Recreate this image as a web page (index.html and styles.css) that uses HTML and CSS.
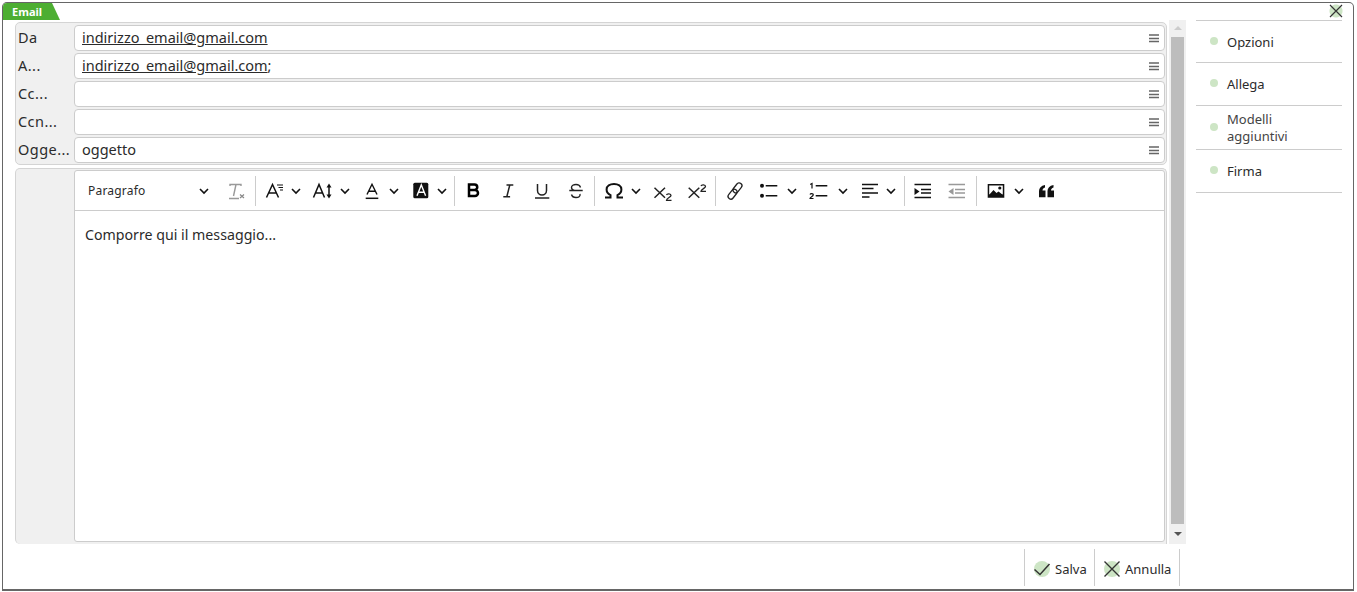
FILE: index.html
```html
<!DOCTYPE html>
<html lang="it">
<head>
<meta charset="utf-8">
<title>Email</title>
<link rel="stylesheet" href="styles.css">
</head>
<body>
<svg class="defs" width="0" height="0" aria-hidden="true">
  <defs>
    <symbol id="chev" viewBox="0 0 10 10"><path d="M1 3l4 4 4-4" fill="none" stroke="#111" stroke-width="1.6"/></symbol>
    <symbol id="menu" viewBox="0 0 10 10"><path d="M0 2h10M0 5.500h10M0 8.500h10" stroke="#666" stroke-width="1.500"/></symbol>
  </defs>
</svg>
<div class="window">
  <div class="topbar">
    <div class="tab">Email</div>
    <button class="close" aria-label="Chiudi"><svg width="14" height="14" viewBox="0 0 14 14"><path d="M1 1l12 12M13 1L1 13" stroke="#333" stroke-width="1.2"/></svg></button>
  </div>
  <div class="content">
    <div class="left">
      <div class="panel fields">
        <div class="row"><span class="label">Da</span><div class="input"><span class="val link">indirizzo_email@gmail.com</span><svg class="menu"><use href="#menu"/></svg></div></div>
        <div class="row"><span class="label">A...</span><div class="input"><span class="val"><span class="link">indirizzo_email@gmail.com</span>;</span><svg class="menu"><use href="#menu"/></svg></div></div>
        <div class="row"><span class="label">Cc...</span><div class="input"><span class="val"></span><svg class="menu"><use href="#menu"/></svg></div></div>
        <div class="row"><span class="label">Ccn...</span><div class="input"><span class="val"></span><svg class="menu"><use href="#menu"/></svg></div></div>
        <div class="row"><span class="label">Ogge...</span><div class="input"><span class="val">oggetto</span><svg class="menu"><use href="#menu"/></svg></div></div>
      </div>
      <div class="panel editor-panel">
        <div class="editor">
          <div class="toolbar">
            <div class="format">Paragrafo<svg class="chev"><use href="#chev"/></svg></div>
            <svg class="ic ml-9" viewBox="0 0 20 20"><path d="M3 5V3.500h11V5M9 3.500L6.500 15M2 17.500h10" fill="none" stroke="#999" stroke-width="1.400"/><path d="M13 13.500l4 3.500M17 13.500L13 17" stroke="#888" stroke-width="1.200"/></svg>
            <span class="sep ml-8"></span>
            <svg class="ic ml-9" viewBox="0 0 20 20"><path d="M1.500 16.500L7.500 3.500l6 13M3.800 12h7.400" fill="none" stroke="#111" stroke-width="1.500"/><path d="M12 4h6M13.500 6.500H18M15 9h3" stroke="#111" stroke-width="1.200"/></svg>
            <svg class="chev ml-6"><use href="#chev"/></svg>
            <svg class="ic ml-11" viewBox="0 0 20 20"><path d="M1.500 16.500L7 3.500l5.500 13M3.500 12h7" fill="none" stroke="#111" stroke-width="1.500"/><path d="M17 5v10" stroke="#111" stroke-width="1.500"/><path d="M14.500 6.500L17 2.500l2.500 4zM14.500 13.500l2.500 4 2.500-4z" fill="#111"/></svg>
            <svg class="chev ml-8"><use href="#chev"/></svg>
            <svg class="ic ml-12" viewBox="0 0 20 20"><path d="M5 13.500L10 3.300l5 10.200M6.500 10.300h7" fill="none" stroke="#111" stroke-width="1.400"/><path d="M3.700 17.300h12.600" stroke="#111" stroke-width="1.500"/></svg>
            <svg class="chev ml-7"><use href="#chev"/></svg>
            <svg class="ic ml-12" viewBox="0 0 20 20"><rect x="2.300" y="1.700" width="15" height="15.600" rx="1.500" fill="#111"/><path d="M6 14.700L10.300 4l4.300 10.700M7.300 11.300h6" fill="none" stroke="#fff" stroke-width="1.400"/></svg>
            <svg class="chev ml-6"><use href="#chev"/></svg>
            <span class="sep ml-7"></span>
            <svg class="ic ml-9" viewBox="0 0 20 20"><path d="M5 3.500h5.500a2.750 2.750 0 0 1 0 5.500H5zM5 9h6a3 3 0 0 1 0 6H5z" fill="none" stroke="#000" stroke-width="2.500"/></svg>
            <svg class="ic ml-14" viewBox="0 0 20 20"><path d="M8.500 4h6.800M5.300 15.800h6.800M11.800 4L8.800 15.800" fill="none" stroke="#222" stroke-width="1.500"/></svg>
            <svg class="ic ml-14" viewBox="0 0 20 20"><path d="M5.500 3v6.500a4.500 4.500 0 0 0 9 0V3M3 17h14.300" fill="none" stroke="#222" stroke-width="1.500"/></svg>
            <svg class="ic ml-14" viewBox="0 0 20 20"><path d="M14.500 6.500C14 4.500 12 3.500 10 3.500c-2.500 0-4.500 1.200-4.500 3 0 1.500 1 2.500 3 3M14 13c.5 2.500-1.500 3.500-4 3.500s-4-1-4.500-3M3.300 9.500h13.400" fill="none" stroke="#222" stroke-width="1.400"/></svg>
            <span class="sep ml-8"></span>
            <svg class="ic ml-9" viewBox="0 0 20 20"><path d="M1 16.400h5.500v-2.200C4.200 13 2.600 11 2.600 8.500 2.600 5 6 3 10 3s7.400 2 7.400 5.500c0 2.500-1.600 4.500-3.900 5.700v2.200H19" fill="none" stroke="#111" stroke-width="2"/></svg>
            <svg class="chev ml-7"><use href="#chev"/></svg>
            <svg class="ic ml-12" viewBox="0 0 20 20"><path d="M1.500 6.700l10.500 10M12 6.700L1.500 16.700" stroke="#222" stroke-width="1.500"/><path d="M13.500 14c.5-1.500 4.500-1.500 4.500.5 0 1.800-4.500 2.500-4.500 5h5" fill="none" stroke="#222" stroke-width="1.300"/></svg>
            <svg class="ic ml-14" viewBox="0 0 20 20"><path d="M1.700 6.700l10.600 10M12.300 6.700L1.700 16.700" stroke="#222" stroke-width="1.500"/><path d="M14 5c.5-1.500 4.500-1.500 4.500.5 0 1.800-4.500 2.500-4.500 4.800h5" fill="none" stroke="#222" stroke-width="1.300"/></svg>
            <span class="sep ml-8"></span>
            <svg class="ic ml-9" viewBox="0 0 20 20"><g fill="none" stroke="#222" stroke-width="1.300" transform="rotate(38 10 10)"><rect x="7.200" y="0.500" width="5.600" height="11" rx="2.800"/><rect x="7.200" y="8.500" width="5.600" height="11" rx="2.800"/></g></svg>
            <svg class="ic ml-13" viewBox="0 0 20 20"><circle cx="4" cy="4.700" r="2" fill="#111"/><circle cx="4" cy="14.700" r="2" fill="#111"/><path d="M7.700 4.700h11.600M7.700 14.700h11.600" stroke="#111" stroke-width="1.600"/></svg>
            <svg class="chev ml-9"><use href="#chev"/></svg>
            <svg class="ic ml-12" viewBox="0 0 20 20"><path d="M1.200 3.500l1.800-1v5" fill="none" stroke="#111" stroke-width="1.200"/><path d="M1 13.500c.5-1.300 3.300-1.300 3.300.3 0 1.500-3.300 2.200-3.300 3.700h3.500" fill="none" stroke="#111" stroke-width="1.200"/><path d="M6.700 4.700h11.600M6.700 14.700h11.600" stroke="#111" stroke-width="1.600"/></svg>
            <svg class="chev ml-9"><use href="#chev"/></svg>
            <svg class="ic ml-13" viewBox="0 0 20 20"><path d="M1 3.500h16M1 7.500h11.500M1 12h16M1 16h7.500" stroke="#111" stroke-width="1.500"/></svg>
            <svg class="chev ml-5"><use href="#chev"/></svg>
            <span class="sep ml-8"></span>
            <svg class="ic ml-8" viewBox="0 0 20 20"><path d="M1.500 3.500h16.500M8 8.500h10M8 12h10M1.500 16.500h16.500" stroke="#111" stroke-width="1.500"/><path d="M1.500 7l5 3.500-5 3.500z" fill="#111"/></svg>
            <svg class="ic ml-14" viewBox="0 0 20 20"><path d="M1.500 3.500h16.500M8 8.500h10M8 12h10M1.500 16.500h16.500" stroke="#999" stroke-width="1.500"/><path d="M6.500 7l-5 3.500 5 3.500z" fill="#999"/></svg>
            <span class="sep ml-9"></span>
            <svg class="ic ml-9" viewBox="0 0 20 20"><path fill-rule="evenodd" d="M1.700 3h16.600v13.700H1.700zM3.200 4.500v9h13.600v-9z" fill="#111"/><path d="M3 14l4.500-5 3 3 2-1.500L17 14v2H3z" fill="#111"/><circle cx="13.800" cy="7" r="1.600" fill="#111"/></svg>
            <svg class="chev ml-8"><use href="#chev"/></svg>
            <svg class="ic ml-12" viewBox="0 0 20 20"><path d="M3 16.300V10C3 7 5 4.700 9 4v2.500C7.300 7 6.500 8 6.500 9.500H9.500v6.800zM11.500 16.300V10c0-3 2-5.300 6-6v2.500c-1.700.5-2.500 1.500-2.500 3h3v6.800z" fill="#111"/></svg>
          </div>
          <div class="body">Comporre qui il messaggio...</div>
        </div>
      </div>
    </div>
    <div class="scrollbar">
      <span class="arrow up"></span>
      <div class="track"><div class="thumb"></div></div>
      <span class="arrow down"></span>
    </div>
    <nav class="side">
      <a class="item">Opzioni</a>
      <a class="item">Allega</a>
      <a class="item double">Modelli aggiuntivi</a>
      <a class="item">Firma</a>
    </nav>
  </div>
  <div class="footer">
    <button class="action save">
      <svg width="18" height="18" viewBox="0 0 18 18"><circle cx="9" cy="9" r="8" fill="#cde5c5"/><path d="M1.500 9.500l5.500 5L16.500 4" fill="none" stroke="#333" stroke-width="1.500"/></svg>
      Salva
    </button>
    <button class="action cancel">
      <svg width="18" height="18" viewBox="0 0 18 18"><circle cx="9" cy="9" r="8" fill="#cde5c5"/><path d="M1.500 1.500l15 15M16.500 1.500l-15 15" stroke="#333" stroke-width="1.400"/></svg>
      Annulla
    </button>
  </div>
</div>
</body>
</html>
```

FILE: styles.css
```css
* { box-sizing: border-box; }
html, body { margin: 0; padding: 0; height: 100%; background: #fff; overflow: hidden; }
body { font-family: "Noto Sans", sans-serif; font-size: 14.5px; color: #2b2b2b; }
.defs { display: block; }

.window {
  margin: 2px 2px 0 2px;
  width: 1352px;
  height: 589px;
  border: 1px solid #666;
  border-bottom-width: 2px;
  border-radius: 5px 5px 0 0;
  display: flex;
  flex-direction: column;
  background: #fff;
}

.topbar { height: 17px; display: flex; justify-content: space-between; flex: none; }
.tab {
  width: 57px;
  height: 17px;
  background: #4dae32;
  color: #fff;
  font-size: 11px;
  font-weight: 700;
  line-height: 18px;
  padding-left: 9px;
  clip-path: polygon(0 0, 49px 0, 57px 100%, 0 100%);
  border-top-left-radius: 4px;
}
.close {
  width: 16px;
  height: 16px;
  margin: 0 9px 0 0;
  padding: 1px;
  border: 0;
  background: radial-gradient(circle at 50% 50%, #cde5c5 0 6px, transparent 7px);
  display: flex;
}

.content { display: flex; flex: none; height: 524px; }
.left { width: 1152px; margin: 2px 0 0 12px; display: flex; flex-direction: column; gap: 3px; }
.panel { background: #f0f0f0; border: 1px solid #d4d4d4; border-radius: 5px; }
.fields { height: 143px; padding: 2px 1px 0 58px; display: flex; flex-direction: column; gap: 2px; }
.row { height: 26px; display: flex; }
.label { width: 58px; margin-left: -56px; flex: none; line-height: 25px; white-space: nowrap; letter-spacing: .45px; }
.input {
  flex: 1;
  margin-left: -2px;
  height: 26px;
  background: #fff;
  border: 1px solid #ccc;
  border-radius: 4px;
  display: flex;
  align-items: center;
  justify-content: space-between;
  padding: 0 5px 0 7px;
}
.val { line-height: 24px; margin-top: -2px; }
.link { text-decoration: underline; }
.menu { width: 10px; height: 10px; }

.editor-panel { height: 376px; padding: 1px 1px 1px 58px; border-bottom: 0; border-radius: 5px 5px 0 5px; }
.editor { height: 372px; background: #fff; border: 1px solid #ccc; border-radius: 3px; display: flex; flex-direction: column; }
.toolbar { height: 40px; flex: none; border-bottom: 1px solid #ccc; display: flex; align-items: center; }
.format { width: 143px; display: flex; justify-content: space-between; align-items: center; padding: 0 9px 0 13px; font-size: 12px; letter-spacing: .2px; }
.body { padding: 13px 10px; line-height: 21px; font-size: 14.2px; }

.ic { width: 20px; height: 20px; flex: none; }
.chev { width: 10px; height: 10px; flex: none; }
.sep { width: 1px; height: 30px; background: #ccc; flex: none; }
.ml-5 { margin-left: 5px; }
.ml-6 { margin-left: 6px; }
.ml-7 { margin-left: 7px; }
.ml-8 { margin-left: 8px; }
.ml-9 { margin-left: 9px; }
.ml-11 { margin-left: 11px; }
.ml-12 { margin-left: 12px; }
.ml-13 { margin-left: 13px; }
.ml-14 { margin-left: 14px; }

.scrollbar { width: 17px; margin: 0 0 0 2px; height: 524px; background: #f0f0f0; display: flex; flex-direction: column; align-items: center; }
.arrow { width: 0; height: 0; border-left: 4px solid transparent; border-right: 4px solid transparent; flex: none; }
.arrow.up { border-bottom: 4px solid #ccc; margin: 6px 0 7px; }
.arrow.down { border-top: 4px solid #555; margin: 8px 0 8px; }
.track { flex: 1; width: 13px; }
.thumb { height: 100%; background: #bdbdbd; }

.side { width: 146px; margin-left: 10px; border-top: 1px solid #ccc; height: 173px; display: flex; flex-direction: column; font-size: 13px; }
.item {
  height: 43px;
  flex: none;
  border-bottom: 1px solid #ccc;
  padding: 1px 50px 0 31px;
  display: flex;
  align-items: center;
  line-height: 17px;
  position: relative;
}
.item:first-child { height: 42px; }
.item.double { height: 44px; color: #444; padding-top: 0; padding-bottom: 0; }
.item::before {
  content: "";
  position: absolute;
  left: 14px;
  top: 50%;
  margin-top: -5px;
  width: 8px;
  height: 8px;
  border-radius: 50%;
  background: #cde5c5;
}

.footer { flex: 1; display: flex; justify-content: flex-end; padding: 5px 173px 0 0; }
.action {
  height: 37px;
  border: 0;
  border-left: 1px solid #ccc;
  background: #fff;
  font: inherit;
  font-size: 13px;
  color: #2b2b2b;
  display: flex;
  align-items: center;
  gap: 4px;
  padding: 2px 0 0 8px;
}
.save { width: 70px; }
.cancel { width: 86px; border-right: 1px solid #ccc; }
```
